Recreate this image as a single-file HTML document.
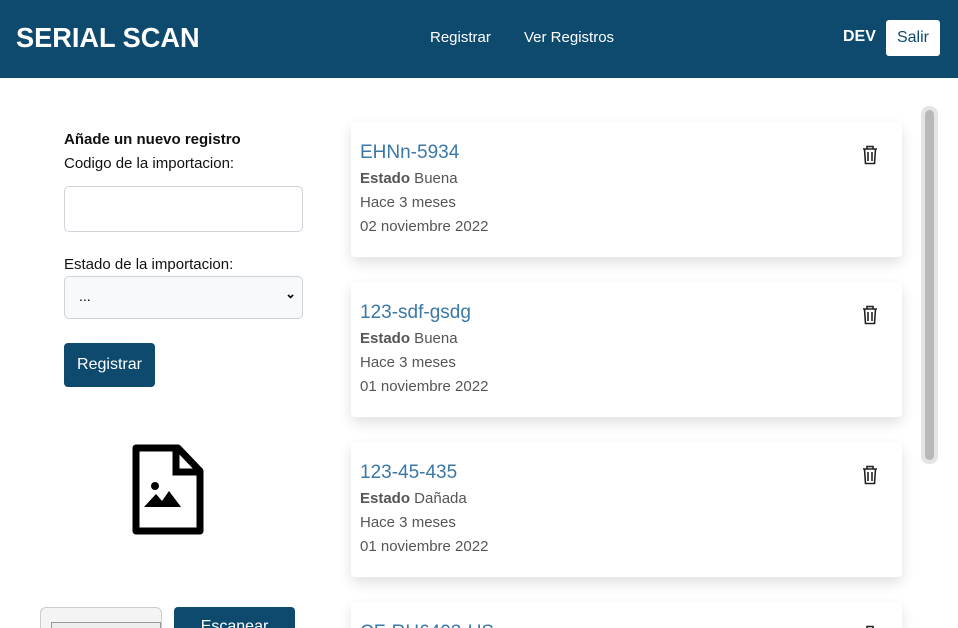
<!DOCTYPE html>
<html style="width:958px;height:628px;overflow:hidden"><head><style>
*{box-sizing:border-box;margin:0;padding:0}
body{width:958px;height:628px;overflow:hidden;background:#fff;font-family:"Segoe UI","Liberation Sans",sans-serif;position:relative}
.hdr{position:absolute;left:0;top:0;width:958px;height:78px;background:#0e4a6e;color:#fff}
.logo{position:absolute;left:16px;top:22px;font-size:28px;font-weight:bold;transform:scaleX(0.97);transform-origin:left}
.nav{position:absolute;top:29px;font-size:15px}
.dev{position:absolute;left:843px;top:28px;font-weight:bold;font-size:16px}
.salir{position:absolute;left:886px;top:20px;width:54px;height:36px;background:#fff;color:#0e4a6e;border-radius:3px;font-size:16px;text-align:center;line-height:36px}
.t{position:absolute;font-size:15px;color:#111}
.inp{position:absolute;left:64px;border:1px solid #ced4da;border-radius:5px;width:239px}
.btn{position:absolute;background:#0e4a6e;color:#fff;border-radius:4px;font-size:16px;text-align:center}
.card{position:absolute;left:351px;width:551px;height:135px;background:#fff;border-radius:4px;box-shadow:0 6px 14px rgba(0,0,0,0.12)}
.card .c{position:absolute;left:9px;top:20px;font-size:19px;color:#3a78a8}
.card .l{position:absolute;left:9px;font-size:15px;color:#555}
.card svg{position:absolute;left:510px;top:23px}
.sb{position:absolute;left:921px;top:106px;width:17px;height:358px;background:#e4e4e4;border-radius:8px}
.sb div{position:absolute;left:4px;top:4px;width:9px;height:350px;background:#b8b8b8;border-radius:5px}
</style></head><body>
<div class="hdr">
<div class="logo">SERIAL SCAN</div>
<div class="nav" style="left:430px">Registrar</div>
<div class="nav" style="left:524px">Ver Registros</div>
<div class="dev">DEV</div>
<div class="salir">Salir</div>
</div>
<div class="t" style="left:64px;top:131px;font-weight:bold">Añade un nuevo registro</div>
<div class="t" style="left:64px;top:155px">Codigo de la importacion:</div>
<div class="inp" style="top:186px;height:46px"></div>
<div class="t" style="left:64px;top:256px">Estado de la importacion:</div>
<div class="inp" style="top:276px;height:43px;background:#f8f9fa"><span style="position:absolute;left:14px;top:11px;font-size:14px">...</span><span style="position:absolute;right:6px;top:9px;font-size:13px;font-weight:bold">&#8964;</span></div>
<div class="btn" style="left:64px;top:343px;width:91px;height:44px;line-height:43px">Registrar</div>
<svg style="position:absolute;left:132px;top:444px" width="72" height="91" viewBox="0 0 72 91"><path d="M4 4H46L68 27V87H4Z" fill="none" stroke="#000" stroke-width="7" stroke-linejoin="round"/><path d="M44 4V28H68" fill="none" stroke="#000" stroke-width="7"/><circle cx="23" cy="42" r="4"/><path d="M12 63L24 50L30 57L37 47L49 63Z"/></svg>
<div style="position:absolute;left:40px;top:607px;width:122px;height:30px;border:1px solid #ccc;border-radius:6px;background:#f4f4f4"><div style="position:absolute;left:10px;top:14px;width:110px;height:20px;border:1px solid #999;background:#eee"></div></div>
<div class="btn" style="left:174px;top:607px;width:121px;height:30px;line-height:40px">Escanear</div>
<div class="card" style="top:122px"><div class="c">EHNn-5934</div><div class="l" style="top:48px"><b>Estado</b> Buena</div><div class="l" style="top:72px">Hace 3 meses</div><div class="l" style="top:96px">02 noviembre 2022</div><svg width="18" height="20" viewBox="0 0 18 20"><path d="M2 4H16M6 4V1.5H12V4M3.5 4L4.5 18.5H13.5L14.5 4M7 7V16M11 7V16" fill="none" stroke="#222" stroke-width="1.6"/></svg></div>
<div class="card" style="top:282px"><div class="c">123-sdf-gsdg</div><div class="l" style="top:48px"><b>Estado</b> Buena</div><div class="l" style="top:72px">Hace 3 meses</div><div class="l" style="top:96px">01 noviembre 2022</div><svg width="18" height="20" viewBox="0 0 18 20"><path d="M2 4H16M6 4V1.5H12V4M3.5 4L4.5 18.5H13.5L14.5 4M7 7V16M11 7V16" fill="none" stroke="#222" stroke-width="1.6"/></svg></div>
<div class="card" style="top:442px"><div class="c">123-45-435</div><div class="l" style="top:48px"><b>Estado</b> Dañada</div><div class="l" style="top:72px">Hace 3 meses</div><div class="l" style="top:96px">01 noviembre 2022</div><svg width="18" height="20" viewBox="0 0 18 20"><path d="M2 4H16M6 4V1.5H12V4M3.5 4L4.5 18.5H13.5L14.5 4M7 7V16M11 7V16" fill="none" stroke="#222" stroke-width="1.6"/></svg></div>
<div class="card" style="top:602px;height:26px;border-radius:4px 4px 0 0"><div class="c">CF-RH6403-US</div><svg width="18" height="20" viewBox="0 0 18 20"><path d="M2 4H16M6 4V1.5H12V4M3.5 4L4.5 18.5H13.5L14.5 4M7 7V16M11 7V16" fill="none" stroke="#222" stroke-width="1.6"/></svg></div>
<div class="sb"><div></div></div>
</body></html>
